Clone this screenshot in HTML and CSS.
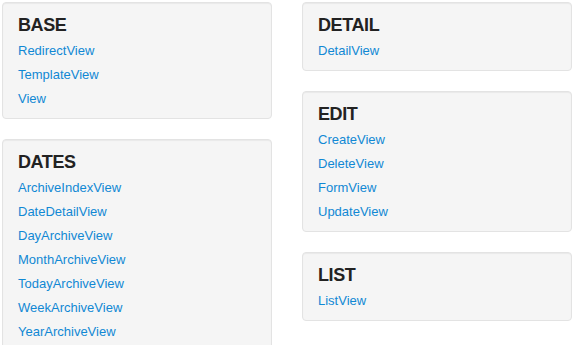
FILE: index.html
```html
<!DOCTYPE html>
<html lang="en">
<head>
  <meta charset="UTF-8" />
  <title>Generic views</title>
  <link rel="stylesheet" href="styles.css">
</head>
<body>

  <div class="columns">
    <div class="column">
      <div class="well">
        <h2>BASE</h2>
        <ul>
          <li><a href="#">RedirectView</a></li>
          <li><a href="#">TemplateView</a></li>
          <li><a href="#">View</a></li>
        </ul>
      </div>
      <div class="well">
        <h2>DATES</h2>
        <ul>
          <li><a href="#">ArchiveIndexView</a></li>
          <li><a href="#">DateDetailView</a></li>
          <li><a href="#">DayArchiveView</a></li>
          <li><a href="#">MonthArchiveView</a></li>
          <li><a href="#">TodayArchiveView</a></li>
          <li><a href="#">WeekArchiveView</a></li>
          <li><a href="#">YearArchiveView</a></li>
        </ul>
      </div>
    </div>

    <div class="column">
      <div class="well">
        <h2>DETAIL</h2>
        <ul>
          <li><a href="#">DetailView</a></li>
        </ul>
      </div>
      <div class="well">
        <h2>EDIT</h2>
        <ul>
          <li><a href="#">CreateView</a></li>
          <li><a href="#">DeleteView</a></li>
          <li><a href="#">FormView</a></li>
          <li><a href="#">UpdateView</a></li>
        </ul>
      </div>
      <div class="well">
        <h2>LIST</h2>
        <ul>
          <li><a href="#">ListView</a></li>
        </ul>
      </div>
    </div>
  </div>

</body>
</html>
```

FILE: styles.css
```css
* {
  box-sizing: border-box;
  margin: 0;
  padding: 0;
}

body {
  background-color: white;
  color: #333;
  font-family: "Liberation Sans", Arial, sans-serif;
  font-size: 13px;
  padding: 2px;
}

.columns {
  display: grid;
  grid-template-columns: 270px 270px;
  column-gap: 30px;
}

.column {
  display: flex;
  flex-direction: column;
  gap: 20px;
}

.well {
  background-color: #f5f5f5;
  border: 1px solid #e3e3e3;
  border-radius: 4px;
  box-shadow: inset 0 1px 1px rgba(0, 0, 0, 0.05);
  padding: 12px 15px 7px;
}

h2 {
  font-size: 18px;
  line-height: 20px;
  font-weight: bold;
  letter-spacing: -0.4px;
  color: #222;
  margin-bottom: 4px;
}

ul {
  list-style: none;
}

li {
  line-height: 24px;
}

a {
  color: #1188d4;
  text-decoration: none;
}

a:hover {
  text-decoration: underline;
}
```
